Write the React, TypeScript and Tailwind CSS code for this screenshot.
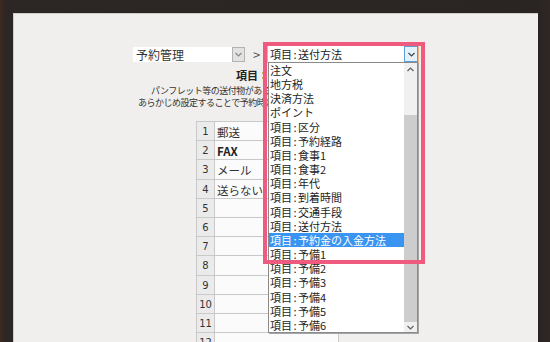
import React from "react";

const JP = { fontFamily: '"Noto Sans CJK JP", "Noto Sans", sans-serif' };
const NUM = { fontFamily: '"DejaVu Sans", "Liberation Sans", sans-serif' };

const items = [
  "注文",
  "地方税",
  "決済方法",
  "ポイント",
  "項目:区分",
  "項目:予約経路",
  "項目:食事1",
  "項目:食事2",
  "項目:年代",
  "項目:到着時間",
  "項目:交通手段",
  "項目:送付方法",
  "項目:予約金の入金方法",
  "項目:予備1",
  "項目:予備2",
  "項目:予備3",
  "項目:予備4",
  "項目:予備5",
  "項目:予備6",
];

function Label({ text }: { text: string }) {
  const i = text.indexOf(":");
  if (i < 0) return <>{text}</>;
  return (
    <>
      {text.slice(0, i)}
      <span className="inline-block w-[6px] text-center">:</span>
      {text.slice(i + 1)}
    </>
  );
}

function Chevron({ up = false, color = "#555" }: { up?: boolean; color?: string }) {
  return (
    <svg width="7" height="5" viewBox="0 0 7 5">
      <polyline
        points={up ? "0.5,4 3.5,1 6.5,4" : "0.5,1 3.5,4 6.5,1"}
        fill="none"
        stroke={color}
        strokeWidth="1.2"
      />
    </svg>
  );
}

const rows = ["郵送", "FAX", "メール", "送らない", "", "", "", "", "", "", "", ""];

export default function App() {
  return (
    <div className="w-[550px] h-[342px] overflow-hidden flex pt-[13px] pl-[13px] pr-[12px] bg-[linear-gradient(90deg,#3d2a20_0px,#2c2624_6px,#2a2523_540px,#2e2724_550px)]">
      <div
        className="relative flex-1 h-[360px] bg-[#f0efed] shadow-[inset_1px_1px_0_#cfcdc9] text-[#333]"
        style={JP}
      >
        {/* selector row */}
        <div className="flex items-start pt-[32px] pl-[120px]">
          <div className="mt-[2px] w-[112px] h-[15px] bg-white flex">
            <div className="flex-1 pl-[3px] text-[12px] leading-[15px] text-[#333]">予約管理</div>
            <div className="w-[13px] h-[15px] bg-[#e2e2e2] border border-[#b3b3b3] flex items-center justify-center">
              <Chevron color="#888" />
            </div>
          </div>
          <div className="w-[22px] pl-[8px] pt-[1px] text-[13px] leading-[17px] text-[#555]">&gt;</div>
          <div className="w-[152px] h-[18px] bg-white border border-[#f2b27c] flex">
            <div className="flex-1 pl-[2px] text-[11px] leading-[16px] text-[#222]">
              <Label text="項目:送付方法" />
            </div>
            <div className="w-[14px] h-[16px] bg-[#e5f1fb] border border-[#5b9fd8] flex items-center justify-center">
              <Chevron color="#444" />
            </div>
          </div>
        </div>

        {/* title & description */}
        <div className="mt-[5px] pl-[223px] text-[11px] leading-[14px] font-bold text-[#222]">
          項目：送付方法
        </div>
        <div className="mt-[3px] text-[9px] leading-[12px] tracking-[-0.5px] text-[#333] whitespace-nowrap">
          <div className="pl-[138px]">パンフレット等の送付物がある場合は、送付方法を登録してください。</div>
          <div className="pl-[125px]">あらかじめ設定することで予約時に選択できるようになります。</div>
        </div>

        {/* table */}
        <div className="mt-[12px] ml-[183px] w-[143px] border-t border-[#c9c9c9]">
          {rows.map((v, i) => (
            <div key={i} className="flex h-[19.2px] border-b border-[#c9c9c9]">
              <div
                className="w-[19px] bg-[#ebebeb] border-l border-r border-[#c9c9c9] text-center text-[10px] leading-[19px] text-[#333]"
                style={NUM}
              >
                {i + 1}
              </div>
              <div
                className={
                  "flex-1 bg-[#fbfbfb] border-r border-[#c9c9c9] pl-[2px] text-[11.5px] leading-[21px] " +
                  (v === "FAX" ? "font-bold text-[#222]" : "text-[#333]")
                }
              >
                {v}
              </div>
            </div>
          ))}
        </div>

        {/* dropdown list (overlay) */}
        <div className="absolute left-[255px] top-[49px] w-[150px] h-[271px] bg-white border border-[#8a8a8a] shadow-[1px_1px_0_#a5a5a5] flex">
          <div className="flex-1 flex flex-col">
            {items.map((t, i) => (
              <div
                key={i}
                className={
                  "h-[14.17px] pl-[1px] text-[11px] leading-[14px] whitespace-nowrap " +
                  (i === 12 ? "bg-[#3a94f2] text-white" : "text-[#1e1e1e]")
                }
              >
                <Label text={t} />
              </div>
            ))}
          </div>
          <div className="w-[13px] bg-[#f0f0f0] flex flex-col">
            <div className="h-[13px] flex items-center justify-center">
              <Chevron up color="#606060" />
            </div>
            <div className="h-[39px]" />
            <div className="h-[207px] bg-[#cdcdcd]" />
            <div className="flex-1 flex items-center justify-center">
              <Chevron color="#606060" />
            </div>
          </div>
        </div>

        {/* pink highlight frame (annotation) */}
        <div className="absolute left-[250px] top-[28.5px] w-[162px] h-[222px] border-4 border-[#ee5b7f]" />
      </div>
    </div>
  );
}
